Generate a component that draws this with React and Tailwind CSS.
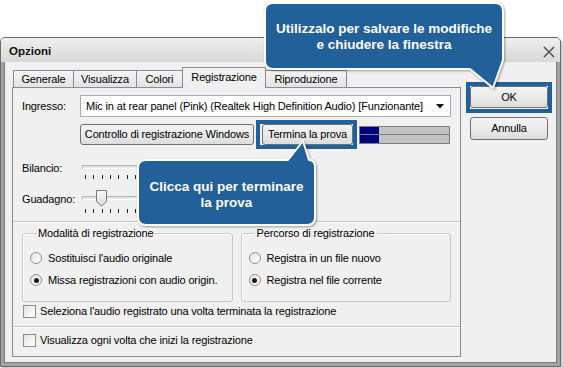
import React from "react";

const TEXT = "text-[11px] leading-[13px] tracking-[-0.15px] text-black";

function Tab({ label, width, active }) {
  if (active) {
    return (
      <div
        className={`relative z-10 -ml-px mb-[-1px] flex h-[21px] items-start justify-center border border-b-0 border-[#898c95] bg-[#f0f0f0] pt-[3px] ${TEXT}`}
        style={{ width }}
      >
        {label}
      </div>
    );
  }
  return (
    <div
      className={`-ml-px flex h-[17px] items-center justify-center border border-b-0 border-[#898c95] bg-linear-to-b from-[#f4f4f4] to-[#e3e3e3] ${TEXT}`}
      style={{ width }}
    >
      {label}
    </div>
  );
}

function Button({ children, className = "" }) {
  return (
    <div
      className={`flex items-center justify-center rounded-[3px] border border-[#707070] bg-linear-to-b from-[#f3f3f3] via-[#ebebeb] to-[#dcdcdc] ${TEXT} ${className}`}
    >
      {children}
    </div>
  );
}

function Radio({ checked, label }) {
  return (
    <div className="flex h-[16px] items-center gap-[6px]">
      <div className="flex h-[12px] w-[12px] items-center justify-center rounded-full border border-[#8e8f8f] bg-linear-to-br from-[#e6e6e6] to-[#ffffff]">
        {checked && <div className="h-[5px] w-[5px] rounded-full bg-[#1a1a1a]" />}
      </div>
      <span className={TEXT}>{label}</span>
    </div>
  );
}

function Checkbox({ label }) {
  return (
    <div className="ml-[1px] flex h-[14px] items-center gap-[4px]">
      <div className="h-[13px] w-[13px] border border-[#8e8f8f] bg-linear-to-br from-[#e4e4e4] to-[#ffffff]" />
      <span className={TEXT}>{label}</span>
    </div>
  );
}

function GroupBox({ title, width, children }) {
  return (
    <fieldset
      className="h-[75px] rounded-[3px] border border-[#c9c9c9] pl-[7px] shadow-[inset_1px_1px_0_#ffffff]"
      style={{ width }}
    >
      <legend className={`ml-[6px] px-[2px] ${TEXT}`}>{title}</legend>
      <div className="mt-[10px] flex flex-col gap-[6px]">{children}</div>
    </fieldset>
  );
}

function Ticks() {
  return (
    <div className="ml-[3px] flex w-[209px] justify-between">
      {Array.from({ length: 26 }).map((_, i) => (
        <div key={i} className="h-[4px] w-px bg-[#222]" />
      ))}
    </div>
  );
}

function Track() {
  return <div className="h-[4px] w-[220px] rounded-[1px] border border-[#b4b4b4] border-b-white border-r-white bg-[#e6e6e6]" />;
}

function Separator() {
  return <div className="-mx-[9px] h-[2px] border-t border-[#c4c4c4] bg-white" />;
}

export default function App() {
  return (
    <div className="relative h-[368px] w-[563px] overflow-hidden bg-white font-['Liberation_Sans',Arial,sans-serif]">
      <div className="pt-[37px]">
        <div className="flex h-[330px] w-[561px] flex-col rounded-t-[5px] border border-[#6a6a6a] bg-[#a2a2a2] shadow-[2px_2px_0_rgba(0,0,0,0.18)]">
          {/* title bar */}
          <div className="flex h-[24px] items-center justify-between rounded-t-[4px] bg-linear-to-b from-[#efefef] to-[#d8d8d8] pl-[8px] pr-[4px] pt-[3px]">
            <span className="text-[11.5px] font-bold text-[#111]">Opzioni</span>
            <svg width="14" height="14" viewBox="0 0 14 14">
              <path d="M2 2 L12 12 M12 2 L2 12" stroke="#555" strokeWidth="1.6" />
            </svg>
          </div>

          {/* client area */}
          <div className="mx-[3px] mb-[3px] flex flex-1 border-x border-b border-[#7d7d7d] bg-[#f0f0f0]">
            <div className="ml-[7px] w-[449px] pt-[5px]">
              <div className="flex h-[20px] items-end pl-[2px]">
                <Tab label="Generale" width={61} />
                <Tab label="Visualizza" width={64} />
                <Tab label="Colori" width={47} />
                <Tab label="Registrazione" width={84} active />
                <Tab label="Riproduzione" width={82} />
              </div>

              <div className="h-[270px] border border-[#898c95] bg-[#f0f0f0] px-[9px] pt-[7px]">
                <div className="flex items-center">
                  <span className={`w-[58px] ${TEXT}`}>Ingresso:</span>
                  <div className="flex h-[22px] w-[371px] items-center justify-between border border-[#a8abb2] bg-white pl-[5px] pr-[6px]">
                    <span className={TEXT}>Mic in at rear panel (Pink) (Realtek High Definition Audio) [Funzionante]</span>
                    <svg width="8" height="5" viewBox="0 0 8 5">
                      <path d="M0 0 H8 L4 4.5 Z" fill="#111" />
                    </svg>
                  </div>
                </div>

                <div className="ml-[58px] mt-[7px] flex items-center">
                  <Button className="h-[21px] w-[174px]">Controllo di registrazione Windows</Button>
                  <Button className="ml-[8px] h-[21px] w-[91px]">Termina la prova</Button>
                  <div className="ml-[6px] flex h-[18px] w-[91px] flex-col gap-px border border-[#7d7d7d] bg-[#7d7d7d]">
                    <div className="flex h-[8px] bg-[#c2c2c2]">
                      <div className="w-[19px] bg-[#000080]" />
                    </div>
                    <div className="flex h-[8px] bg-[#c2c2c2]">
                      <div className="w-[19px] bg-[#000080]" />
                    </div>
                  </div>
                </div>

                <div className="mt-[16px] flex items-start">
                  <span className={`mt-[1px] w-[60px] ${TEXT}`}>Bilancio:</span>
                  <div className="pt-[4px]">
                    <Track />
                    <div className="mt-[6px]">
                      <Ticks />
                    </div>
                  </div>
                </div>

                <div className="mt-[11px] flex items-start">
                  <span className={`mt-[3px] w-[60px] ${TEXT}`}>Guadagno:</span>
                  <div className="relative pt-[6px]">
                    <Track />
                    <svg width="11" height="17" viewBox="0 0 11 17" className="absolute left-[14px] top-0">
                      <defs>
                        <linearGradient id="th" x1="0" x2="0" y1="0" y2="1">
                          <stop offset="0" stopColor="#fafafa" />
                          <stop offset="1" stopColor="#d9d9d9" />
                        </linearGradient>
                      </defs>
                      <path d="M0.5 0.5 H10.5 V11.5 L5.5 16 L0.5 11.5 Z" fill="url(#th)" stroke="#7a7a7a" />
                    </svg>
                    <div className="mt-[9px]">
                      <Ticks />
                    </div>
                  </div>
                </div>

                <div className="mt-[8px]">
                  <Separator />
                </div>

                <div className="mt-[4px] flex gap-[8px]">
                  <GroupBox title="Modalità di registrazione" width={211}>
                    <Radio label="Sostituisci l'audio originale" />
                    <Radio label="Missa registrazioni con audio origin." checked />
                  </GroupBox>
                  <GroupBox title="Percorso di registrazione" width={211}>
                    <Radio label="Registra in un file nuovo" />
                    <Radio label="Registra nel file corrente" checked />
                  </GroupBox>
                </div>

                <div className="mt-[2px]">
                  <Checkbox label="Seleziona l'audio registrato una volta terminata la registrazione" />
                </div>
                <div className="mt-[8px]">
                  <Separator />
                </div>
                <div className="mt-[5px]">
                  <Checkbox label="Visualizza ogni volta che inizi la registrazione" />
                </div>
              </div>
            </div>

            <div className="ml-[9px] flex flex-col gap-[9px] pt-[24px]">
              <Button className="h-[22px] w-[78px]">OK</Button>
              <Button className="h-[23px] w-[78px]">Annulla</Button>
            </div>
          </div>
        </div>
      </div>

      {/* highlight frames around the pointed-out buttons */}
      <div className="pointer-events-none absolute left-[466px] top-[82px] h-[31px] w-[86px] border-[4px] border-[#22609a]" />
      <div className="pointer-events-none absolute left-[256px] top-[120px] h-[29px] w-[101px] border-[4px] border-[#22609a]" />

      {/* callouts */}
      <svg
        width="563"
        height="368"
        viewBox="0 0 563 368"
        className="pointer-events-none absolute left-0 top-0 drop-shadow-[1px_1px_1px_rgba(0,0,0,0.35)]"
      >
        <path
          d="M273 3 H495 Q503 3 503 11 V60 L493 88 L470 69 H273 Q265 69 265 61 V11 Q265 3 273 3 Z"
          fill="#22609a"
          stroke="#ffffff"
          strokeWidth="2"
          strokeLinejoin="round"
        />
        <path
          d="M146 160 H288 L303 141 L309 160 Q315 160 315 167 V217 Q315 225 307 225 H146 Q138 225 138 217 V168 Q138 160 146 160 Z"
          fill="#22609a"
          stroke="#ffffff"
          strokeWidth="2"
          strokeLinejoin="round"
        />
      </svg>
      <div className="absolute left-[265px] top-[21px] w-[238px] text-center text-[13.5px] font-bold leading-[16px] text-white">
        Utilizzalo per salvare le modifiche
        <br />
        e chiudere la finestra
      </div>
      <div className="absolute left-[138px] top-[179px] w-[177px] text-center text-[13.5px] font-bold leading-[16px] text-white">
        Clicca qui per terminare
        <br />
        la prova
      </div>
    </div>
  );
}
